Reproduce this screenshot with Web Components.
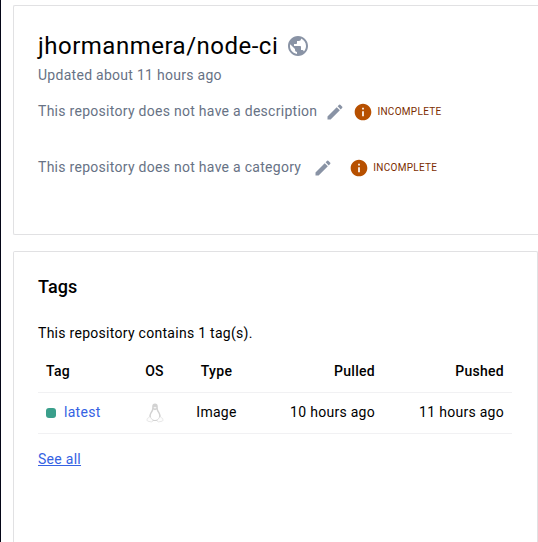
<!DOCTYPE html>
<html lang="en"><head><meta charset="utf-8"><title>jhormanmera/node-ci</title>
<style>
html,body{margin:0;height:542px;overflow:hidden;background:#fff}
body{font:14px/20px Roboto,sans-serif;letter-spacing:.28px;color:#000}
</style></head><body>
<repo-page></repo-page>
<script>
const define=(name,html)=>customElements.define(name,class extends HTMLElement{
  constructor(){super();this.attachShadow({mode:'open'}).innerHTML=html;}
});
define('icon-public',`<style>:host{display:block;width:24px;height:24px;color:#8993a5}svg{display:block}</style>
<svg width="24" height="24" viewBox="0 0 24 24" fill="currentColor"><path d="M12 2C6.48 2 2 6.48 2 12s4.48 10 10 10 10-4.48 10-10S17.52 2 12 2zm-1 17.93c-3.95-.49-7-3.85-7-7.93 0-.62.08-1.21.21-1.79L9 15v1c0 1.1.9 2 2 2v1.93zm6.9-2.54c-.26-.81-1-1.39-1.9-1.39h-1v-3c0-.55-.45-1-1-1H8v-2h2c.55 0 1-.45 1-1V7h2c1.1 0 2-.9 2-2v-.41c2.93 1.19 5 4.06 5 7.41 0 2.08-.8 3.97-2.1 5.39z"/></svg>`);
define('icon-edit',`<style>:host{display:block;width:20px;height:20px;color:#8993a5}svg{display:block}</style>
<svg width="20" height="20" viewBox="0 0 24 24" fill="currentColor"><path d="M3 17.25V21h3.75L17.81 9.94l-3.75-3.75L3 17.25zM20.71 7.04c.39-.39.39-1.02 0-1.41l-2.34-2.34a.9959.9959 0 0 0-1.41 0l-1.83 1.83 3.75 3.75 1.83-1.83z"/></svg>`);
define('icon-info',`<style>:host{display:block;width:20px;height:20px;color:#b75000}svg{display:block}</style>
<svg width="20" height="20" viewBox="0 0 24 24" fill="currentColor"><path d="M12 2C6.48 2 2 6.48 2 12s4.48 10 10 10 10-4.48 10-10S17.52 2 12 2zm1 15h-2v-6h2v6zm0-8h-2V7h2v2z"/></svg>`);
define('icon-linux',`<style>:host{display:block;width:18px;height:20px}svg{display:block}</style>
<svg width="18" height="20" viewBox="0 0 18 20"><path d="M9 .5C7.2.5 6.2 1.7 6.2 3.4c0 2.1-.2 3.300-1.100 4.900-.9 1.600-2 3.700-2 6.200L6 18h6l2.900-3.500c0-2.500-1.100-4.600-2-6.200-.9-1.600-1.100-2.800-1.100-4.900C11.800 1.700 10.800.5 9 .5z" fill="#d2d2d2"/><path d="M7.500 6.500 9 7.300l1.500-.8c.2 2 2.700 3.600 2.700 6.600 0 2.400-2 4-4.200 4s-4.200-1.600-4.200-4c0-3 2.500-4.600 2.700-6.600z" fill="#fff"/><path d="M7.300 4.400 9 3.800l1.700.6L9 5.700z" fill="#f5f5f5"/><path d="M3.500 13.600 6.700 17c.5 1.200-.3 2.200-1.700 1.900l-3-.7c-1.200-.4-.9-1-.8-2 .1-1.100.6-1 1.300-1.300zM14.500 13.600 11.300 17c-.5 1.200.3 2.200 1.700 1.900l3-.7c1.200-.4.9-1 .8-2-.1-1.100-.6-1-1.300-1.300z" fill="#fdfdfd" stroke="#e2e2e2" stroke-width=".8"/></svg>`);
define('info-status',`<style>:host{display:flex;align-items:center;gap:4px;color:#7c2d00;font-size:10px;letter-spacing:.3px}</style><icon-info></icon-info><span><slot></slot></span>`);
define('editable-line',`<style>:host{display:flex;align-items:center;height:24px;color:#677285}icon-edit{margin:2px 0 0 var(--edit-gap,8px)}info-status{margin:2px 0 0 var(--status-gap,8px)}</style>
<span><slot></slot></span><icon-edit></icon-edit><info-status>INCOMPLETE</info-status>`);
define('outline-card',`<style>:host{display:block;box-sizing:border-box;border:1px solid #e1e1e3;border-radius:2px;padding:24px;background:#fff}</style><slot></slot>`);
define('repo-header',`<style>:host{display:block}.title{display:flex;align-items:center;gap:8px;height:32px}
h1{margin:0;font-size:24px;line-height:32px;font-weight:400;letter-spacing:.5px}.updated{color:#677285;height:20px;margin-top:3px}
.desc{margin-top:14px}.cat{margin-top:32px;--status-gap:16px;--edit-gap:12px}</style>
<div class="title"><h1>jhormanmera/node-ci</h1><icon-public></icon-public></div>
<div class="updated">Updated about 11 hours ago</div>
<editable-line class="desc">This repository does not have a description</editable-line>
<editable-line class="cat">This repository does not have a category</editable-line>`);
define('tags-table',`<style>:host{display:block;margin-top:7px}table{border-collapse:separate;border-spacing:0;table-layout:fixed;width:474px}
th,td{padding:0 8px;text-align:left;font-weight:400;border-bottom:1px solid #f1f1f3;box-sizing:border-box;height:41px;white-space:nowrap}
td{padding-bottom:2px}th{font-weight:500}th{height:43px}.c{text-align:center}.r{text-align:right}
.tag{display:flex;align-items:center;gap:8px;color:#3562e3}.dot{width:10px;height:10px;margin-top:1px;border-radius:3px;background:#3a9f8b}icon-linux{margin:2px auto 0}</style>
<table><colgroup><col style="width:89px"><col style="width:55px"><col style="width:69px"><col style="width:132px"><col></colgroup>
<tr><th>Tag</th><th class="c">OS</th><th class="c">Type</th><th class="r">Pulled</th><th class="r">Pushed</th></tr>
<tr><td><div class="tag"><span class="dot"></span><span>latest</span></div></td><td class="c"><icon-linux></icon-linux></td><td class="c">Image</td><td class="r">10 hours ago</td><td class="r">11 hours ago</td></tr></table>`);
define('repo-page',`<style>:host{display:flex;flex-direction:column;gap:16px;box-sizing:border-box;height:542px;padding:5px 0 0 12px;border-left:1px solid #050617}
.top{height:230px;flex:none;border-right:0;border-radius:2px 0 0 2px}.tags{flex:1;min-height:0;border-bottom:0;border-radius:2px 2px 0 0;padding-top:23px}h2{margin:0;font-size:18px;line-height:24px;font-weight:500;letter-spacing:.1px}
p{margin:24px 0 0}.all{display:block;margin-top:15px;color:#3562e3;text-decoration:underline}</style>
<outline-card class="top"><repo-header></repo-header></outline-card>
<outline-card class="tags"><h2>Tags</h2><p>This repository contains 1 tag(s).</p><tags-table></tags-table><a class="all">See all</a></outline-card>`);
</script></body></html>
